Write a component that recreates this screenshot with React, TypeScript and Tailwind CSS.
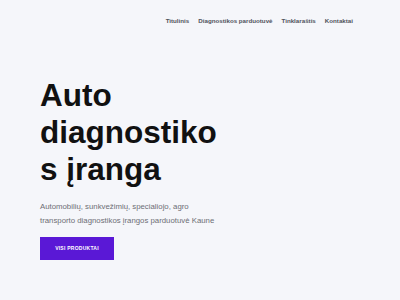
export default function App() {
  return (
    <div className="w-[400px] h-[300px] overflow-hidden bg-[#f5f6fa] font-['Liberation_Sans',Arial,sans-serif]">
      <header className="h-[42px] flex items-center justify-end pr-[47px]">
        <nav className="flex gap-[9px] text-[6.2px] font-bold text-[#50535c] leading-none">
          <a>Titulinis</a>
          <a>Diagnostikos parduotuvė</a>
          <a>Tinklaraštis</a>
          <a>Kontaktai</a>
        </nav>
      </header>
      <main className="pl-[40px]">
        <h1 className="mt-[35px] w-[186px] text-[31.5px] leading-[37px] font-bold text-[#111111] [overflow-wrap:break-word]">
          Auto diagnostikos įranga
        </h1>
        <p className="mt-[12px] w-[180px] text-[7.8px] leading-[14px] text-[#6d6e75]">
          Automobilių, sunkvežimių, specialiojo, agro transporto diagnostikos įrangos parduotuvė Kaune
        </p>
        <button className="mt-[9px] w-[74px] h-[23px] bg-[#5a18d6] text-white text-[5px] font-bold tracking-[0.25px] flex items-center justify-center">
          VISI PRODUKTAI
        </button>
      </main>
    </div>
  );
}
